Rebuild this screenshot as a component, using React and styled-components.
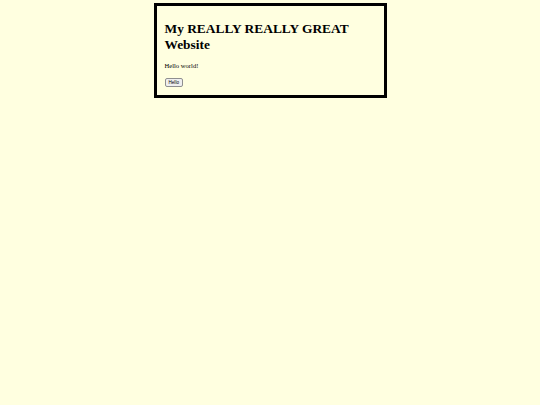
import styled, { createGlobalStyle } from "styled-components";

const GlobalStyle = createGlobalStyle`
  html, body {
    margin: 0;
    background: #ffffe0;
    font-family: "Liberation Serif", "Times New Roman", serif;
  }
`;

const Page = styled.div`
  display: flex;
  justify-content: center;
  padding-top: 3px;
`;

const Card = styled.section`
  width: 233px;
  box-sizing: border-box;
  border: 3px solid #000;
  padding: 0 8px 8px 8px;
`;

const Title = styled.h1`
  font-size: 13.4px;
  line-height: 16px;
  font-weight: bold;
  margin: 15px 0 9px 0;
  color: #000;
`;

const Text = styled.p`
  font-size: 6.6px;
  line-height: 8px;
  margin: 0 0 8px 0;
  color: #000;
`;

const Button = styled.button`
  display: block;
  font-family: "Liberation Sans", Arial, sans-serif;
  font-size: 4.6px;
  line-height: 5px;
  padding: 1px 3px;
  border: 1px solid #8f8f8f;
  border-radius: 2px;
  background: #efefef;
  color: #000;
`;

const App = () => {
  return (
    <>
      <GlobalStyle />
      <Page>
        <Card>
          <Title>My REALLY REALLY GREAT Website</Title>
          <Text>Hello world!</Text>
          <Button>Hello</Button>
        </Card>
      </Page>
    </>
  );
};

export default App;
